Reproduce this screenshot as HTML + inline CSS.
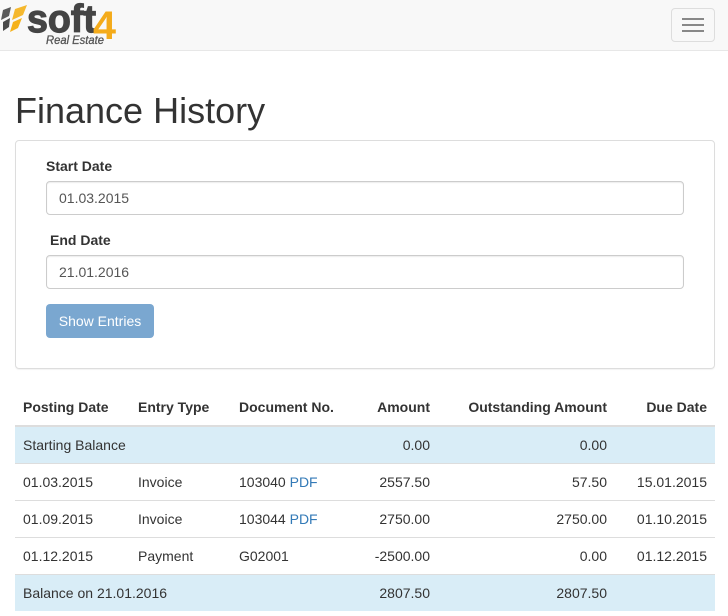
<!DOCTYPE html>
<html><head><meta charset="utf-8">
<style>
html,body{margin:0;padding:0;background:#fff;}
body{width:728px;height:616px;overflow:hidden;position:relative;font-family:"Liberation Sans",sans-serif;font-size:14px;color:#333;}
.a{position:absolute;white-space:nowrap;line-height:20px;}
.r{text-align:right;}
.b{font-weight:bold;}
.row{position:absolute;left:15px;width:700px;}
.input{position:absolute;left:46px;width:636px;height:32px;border:1px solid #ccc;border-radius:4px;box-shadow:inset 0 1px 1px rgba(0,0,0,.075);color:#555;line-height:32px;}
.input span{position:absolute;left:12px;}
a{color:#337ab7;text-decoration:none;}
</style></head><body>
<div style="position:absolute;left:0;top:0;width:728px;height:50px;background:#f8f8f8;border-bottom:1px solid #e7e7e7;"></div>
<svg style="position:absolute;left:0;top:0" width="130" height="50" viewBox="0 0 130 50">
<path d="M3 10 L11 7 L9 16 L1 20Z" fill="#5a5a5a"/>
<path d="M3 22 L10 18 L9 27 L3 31Z" fill="#4a4a4a"/>
<path d="M15 9 L27 5 L23 15 L12 20Z" fill="#f5b82e"/>
<path d="M13 22 L22 18 L18 28 L10 32Z" fill="#f5b21c"/>
<text x="27" y="32" font-family="Liberation Sans" font-weight="bold" font-size="39" textLength="69" lengthAdjust="spacingAndGlyphs" fill="#444" stroke="#444" stroke-width="1.200">soft</text>
<text x="93" y="39" font-family="Liberation Sans" font-weight="bold" font-size="40" textLength="23" lengthAdjust="spacingAndGlyphs" fill="#f4ab1a">4</text>
<text x="46" y="44" font-family="Liberation Sans" font-style="italic" font-size="12" textLength="58" lengthAdjust="spacingAndGlyphs" fill="#555" stroke="#555" stroke-width="0.300">Real Estate</text>
</svg>
<div style="position:absolute;left:671px;top:8px;width:42px;height:32px;border:1px solid #ddd;border-radius:4px;"></div>
<div style="position:absolute;left:682px;top:18px;width:22px;height:2px;background:#888;"></div>
<div style="position:absolute;left:682px;top:24px;width:22px;height:2px;background:#888;"></div>
<div style="position:absolute;left:682px;top:30px;width:22px;height:2px;background:#888;"></div>

<div class="a" style="left:15px;top:91px;font-size:36px;line-height:40px;">Finance History</div>

<div style="position:absolute;left:15px;top:140px;width:698px;height:227px;border:1px solid #ddd;border-radius:4px;box-shadow:0 1px 1px rgba(0,0,0,.05);"></div>
<div class="a b" style="left:46px;top:156px;">Start Date</div>
<div class="input" style="top:181px;"><span>01.03.2015</span></div>
<div class="a b" style="left:50px;top:230px;">End Date</div>
<div class="input" style="top:255px;"><span>21.01.2016</span></div>
<div style="position:absolute;left:46px;top:304px;width:108px;height:34px;background:#7aa7d0;border-radius:4px;color:#fff;text-align:center;line-height:34px;">Show Entries</div>

<div class="row" style="top:425px;height:2px;background:#ddd;"></div>
<div class="row" style="top:427px;height:36px;background:#d9edf7;"></div>
<div class="row" style="top:463px;height:1px;background:#ddd;"></div>
<div class="row" style="top:500px;height:1px;background:#ddd;"></div>
<div class="row" style="top:537px;height:1px;background:#ddd;"></div>
<div class="row" style="top:574px;height:1px;background:#ddd;"></div>
<div class="row" style="top:575px;height:36px;background:#d9edf7;"></div>

<div class="a b" style="left:23px;top:397px;">Posting Date</div>
<div class="a b" style="left:138px;top:397px;">Entry Type</div>
<div class="a b" style="left:239px;top:397px;">Document No.</div>
<div class="a b r" style="right:298px;top:397px;">Amount</div>
<div class="a b r" style="right:121px;top:397px;">Outstanding Amount</div>
<div class="a b r" style="right:21px;top:397px;">Due Date</div>

<div class="a" style="left:23px;top:435px;">Starting Balance</div>
<div class="a r" style="right:298px;top:435px;">0.00</div>
<div class="a r" style="right:121px;top:435px;">0.00</div>

<div class="a" style="left:23px;top:472px;">01.03.2015</div>
<div class="a" style="left:138px;top:472px;">Invoice</div>
<div class="a" style="left:239px;top:472px;">103040 <a>PDF</a></div>
<div class="a r" style="right:298px;top:472px;">2557.50</div>
<div class="a r" style="right:121px;top:472px;">57.50</div>
<div class="a r" style="right:21px;top:472px;">15.01.2015</div>

<div class="a" style="left:23px;top:509px;">01.09.2015</div>
<div class="a" style="left:138px;top:509px;">Invoice</div>
<div class="a" style="left:239px;top:509px;">103044 <a>PDF</a></div>
<div class="a r" style="right:298px;top:509px;">2750.00</div>
<div class="a r" style="right:121px;top:509px;">2750.00</div>
<div class="a r" style="right:21px;top:509px;">01.10.2015</div>

<div class="a" style="left:23px;top:546px;">01.12.2015</div>
<div class="a" style="left:138px;top:546px;">Payment</div>
<div class="a" style="left:239px;top:546px;">G02001</div>
<div class="a r" style="right:298px;top:546px;">-2500.00</div>
<div class="a r" style="right:121px;top:546px;">0.00</div>
<div class="a r" style="right:21px;top:546px;">01.12.2015</div>

<div class="a" style="left:23px;top:583px;">Balance on 21.01.2016</div>
<div class="a r" style="right:298px;top:583px;">2807.50</div>
<div class="a r" style="right:121px;top:583px;">2807.50</div>
</body></html>
